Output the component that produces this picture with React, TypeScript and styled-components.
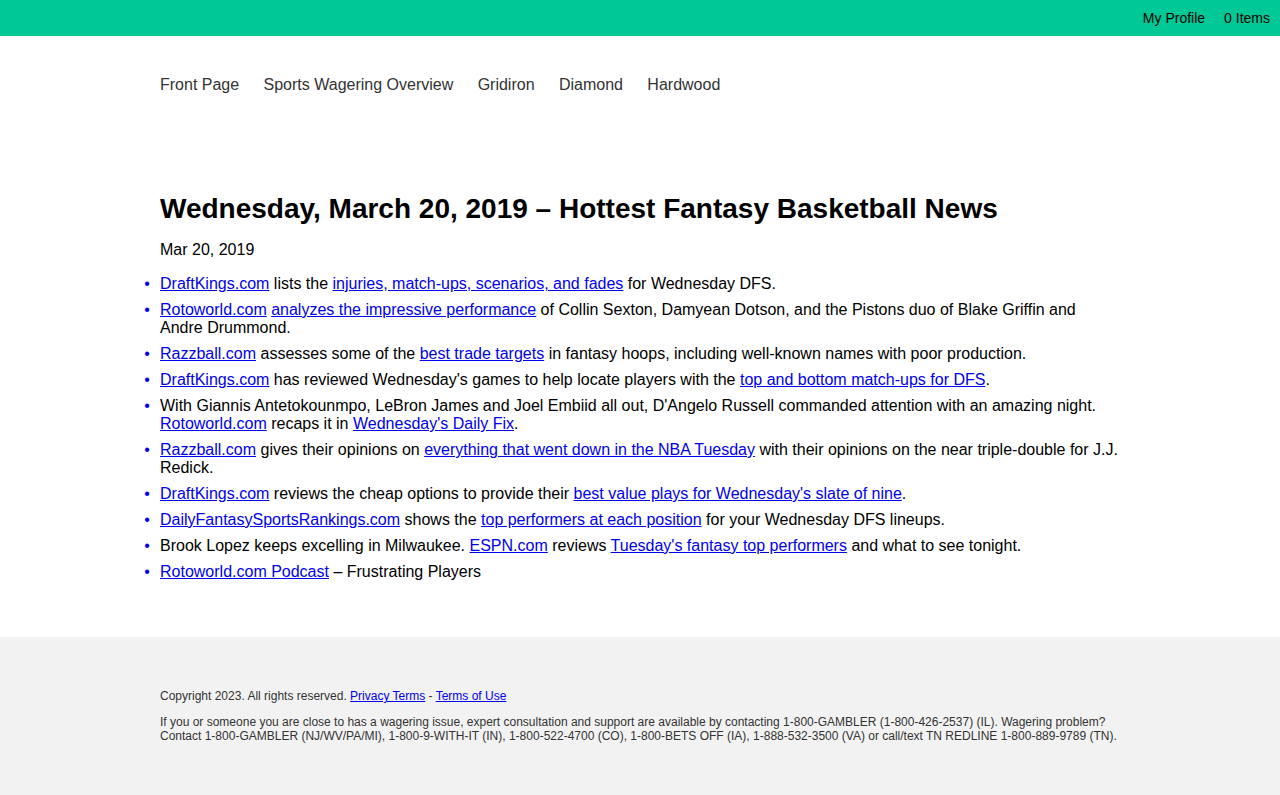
import React from 'react';
import styled, { createGlobalStyle } from 'styled-components';

const GlobalStyle = createGlobalStyle`
    body {
        margin: 0;
        font-family: "Liberation Sans", Arial, sans-serif;
        background: #fff;
        color: #000;
    }
    a {
        color: #0000ee;
    }
`

const TopBar = styled.div`
    height: 36px;
    background: #00c896;
    display: flex;
    justify-content: flex-end;
    align-items: center;
    padding-right: 10px;
    gap: 19px;
    font-size: 14px;
    color: #000;
`

const Container = styled.div`
    width: 960px;
    margin: 0 auto;
`

const Nav = styled.nav`
    display: flex;
    gap: 24.4px;
    padding-top: 40px;
    height: 18px;
    line-height: 18px;
    font-size: 16px;
    color: #333;
`

const Main = styled.main`
    padding-top: 99px;
    padding-bottom: 56px;
`

const Title = styled.h1`
    margin: 0;
    font-size: 28px;
    line-height: 32px;
    font-weight: bold;
`

const DateLine = styled.p`
    margin: 16px 0 16px;
    font-size: 16px;
    line-height: 18px;
`

const List = styled.ul`
    margin: 0;
    padding: 0;
    list-style-type: "•  \\200A";
    font-size: 16px;
    line-height: 18px;

    li {
        margin-bottom: 8px;
    }
    li:last-child {
        margin-bottom: 0;
    }
    li::marker {
        color: #0000ee;
    }
`

const Footer = styled.footer`
    background: #f2f2f2;
    padding: 52px 0 52px;
    font-size: 12px;
    line-height: 14px;
    color: #333;

    p {
        margin: 0 0 12px;
    }
    p:last-child {
        margin-bottom: 0;
    }
`

const navItems = ['Front Page', 'Sports Wagering Overview', 'Gridiron', 'Diamond', 'Hardwood']

function App() {
    return (
        <>
            <GlobalStyle />
            <TopBar>
                <span>My Profile</span>
                <span>0 Items</span>
            </TopBar>
            <Container>
                <Nav>
                    {navItems.map(n => <span key={n}>{n}</span>)}
                </Nav>
            </Container>
            <Container as="main">
                <Main>
                    <Title>Wednesday, March 20, 2019 – Hottest Fantasy Basketball News</Title>
                    <DateLine>Mar 20, 2019</DateLine>
                    <List>
                        <li><a href="#">DraftKings.com</a> lists the <a href="#">injuries, match-ups, scenarios, and fades</a> for Wednesday DFS.</li>
                        <li><a href="#">Rotoworld.com</a> <a href="#">analyzes the impressive performance</a> of Collin Sexton, Damyean Dotson, and the Pistons duo of Blake Griffin and Andre Drummond.</li>
                        <li><a href="#">Razzball.com</a> assesses some of the <a href="#">best trade targets</a> in fantasy hoops, including well-known names with poor production.</li>
                        <li><a href="#">DraftKings.com</a> has reviewed Wednesday's games to help locate players with the <a href="#">top and bottom match-ups for DFS</a>.</li>
                        <li>With Giannis Antetokounmpo, LeBron James and Joel Embiid all out, D'Angelo Russell commanded attention with an amazing night. <a href="#">Rotoworld.com</a> recaps it in <a href="#">Wednesday's Daily Fix</a>.</li>
                        <li><a href="#">Razzball.com</a> gives their opinions on <a href="#">everything that went down in the NBA Tuesday</a> with their opinions on the near triple-double for J.J. Redick.</li>
                        <li><a href="#">DraftKings.com</a> reviews the cheap options to provide their <a href="#">best value plays for Wednesday's slate of nine</a>.</li>
                        <li><a href="#">DailyFantasySportsRankings.com</a> shows the <a href="#">top performers at each position</a> for your Wednesday DFS lineups.</li>
                        <li>Brook Lopez keeps excelling in Milwaukee. <a href="#">ESPN.com</a> reviews <a href="#">Tuesday's fantasy top performers</a> and what to see tonight.</li>
                        <li><a href="#">Rotoworld.com Podcast</a> – Frustrating Players</li>
                    </List>
                </Main>
            </Container>
            <Footer>
                <Container>
                    <p>Copyright 2023. All rights reserved. <a href="#">Privacy Terms</a> - <a href="#">Terms of Use</a></p>
                    <p>If you or someone you are close to has a wagering issue, expert consultation and support are available by contacting 1-800-GAMBLER (1-800-426-2537) (IL). Wagering problem? Contact 1-800-GAMBLER (NJ/WV/PA/MI), 1-800-9-WITH-IT (IN), 1-800-522-4700 (CO), 1-800-BETS OFF (IA), 1-888-532-3500 (VA) or call/text TN REDLINE 1-800-889-9789 (TN).</p>
                </Container>
            </Footer>
        </>
    )
}

export default App
